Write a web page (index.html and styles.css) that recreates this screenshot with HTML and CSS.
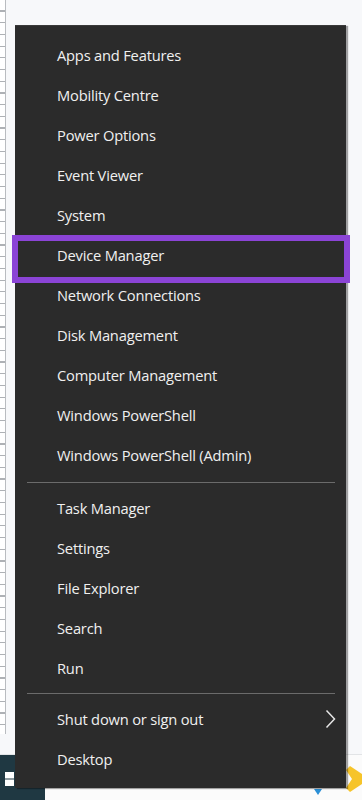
FILE: index.html
```html
<!DOCTYPE html>
<html>
<head>
<meta charset="utf-8">
<link rel="stylesheet" href="styles.css">
</head>
<body>
<div class="screen">
  <div class="desktop">
    <div class="ruler"></div>
  </div>
  <div class="taskbar">
    <div class="start">
      <svg class="winlogo" width="20" height="14" viewBox="0 0 20 14"><rect x="0" y="0" width="9" height="6.5" fill="#fff"/><rect x="10" y="0" width="9" height="6.5" fill="#fff"/><rect x="0" y="7.5" width="9" height="6.5" fill="#fff"/><rect x="10" y="7.5" width="9" height="6.5" fill="#fff"/></svg>
    </div>
    <div class="tray">
      <svg class="bluemark" width="8" height="6" viewBox="0 0 8 6"><polygon points="0,0 8,0 4,6" fill="#2a8fd6"/></svg>
      <svg class="yellow" width="16" height="26" viewBox="0 0 16 26"><polygon points="4,0 16,8 16,18 4,26 0,22 6,13 0,4" fill="#f6c42a"/></svg>
    </div>
  </div>
  <nav class="menu">
    <div class="item">Apps and Features</div>
    <div class="item">Mobility Centre</div>
    <div class="item">Power Options</div>
    <div class="item">Event Viewer</div>
    <div class="item">System</div>
    <div class="item hl">Device Manager</div>
    <div class="item">Network Connections</div>
    <div class="item">Disk Management</div>
    <div class="item">Computer Management</div>
    <div class="item">Windows PowerShell</div>
    <div class="item">Windows PowerShell (Admin)</div>
    <div class="sep sep1"></div>
    <div class="item">Task Manager</div>
    <div class="item">Settings</div>
    <div class="item">File Explorer</div>
    <div class="item">Search</div>
    <div class="item">Run</div>
    <div class="sep sep2"></div>
    <div class="item">Shut down or sign out
      <svg class="chev" width="11" height="20" viewBox="0 0 11 20"><polyline points="1.5,1.5 9.5,10 1.5,18.5" fill="none" stroke="#e6e6e6" stroke-width="1.5"/></svg>
    </div>
    <div class="item">Desktop</div>
  </nav>
</div>
</body>
</html>
```

FILE: styles.css
```css
html, body {
  margin: 0;
  padding: 0;
}
body {
  width: 362px;
  height: 800px;
  overflow: hidden;
  background: #f7f8fa;
  font-family: "Open Sans", "Noto Sans", sans-serif;
}
.screen {
  position: relative;
  width: 362px;
  height: 800px;
  display: flex;
  flex-direction: column;
}
.desktop {
  flex: 1;
  display: flex;
}
.ruler {
  width: 5px;
  margin-bottom: 20px;
  border-right: 1px solid #b9bcc0;
  background: repeating-linear-gradient(to bottom, #ffffff 0, #ffffff 10.5px, #aeb1b5 10.5px, #aeb1b5 11.7px);
}
.taskbar {
  height: 45px;
  display: flex;
  background: #fbfbfb;
  border-top: 1px solid #e2e4e6;
}
.start {
  width: 45px;
  background: #1f3842;
  display: flex;
  align-items: center;
  padding-left: 5px;
  box-sizing: border-box;
}
.winlogo {
  margin-top: 2px;
}
.tray {
  flex: 1;
  display: flex;
  align-items: flex-end;
  justify-content: flex-end;
}
.bluemark {
  margin-right: 24px;
  margin-bottom: 5px;
}
.yellow {
  margin-bottom: 8px;
}
.menu {
  position: absolute;
  left: 15px;
  top: 25px;
  width: 331px;
  height: 763px;
  box-sizing: border-box;
  padding: 10px 0 8px;
  background: #2b2b2b;
  border-top: 1px solid #3a3a3a;
  box-shadow: 2px 1px 1px rgba(0, 0, 0, 0.35);
  display: flex;
  flex-direction: column;
}
.item {
  position: relative;
  height: 40px;
  box-sizing: border-box;
  flex: none;
  display: flex;
  align-items: center;
  padding-left: 42px;
  padding-bottom: 3px;
  font-size: 14.7px;
  color: #f0f0f0;
  letter-spacing: -0.2px;
}
.item.hl::after {
  content: "";
  position: absolute;
  left: -3px;
  right: -4px;
  top: -1px;
  bottom: -7px;
  border: 6px solid #8b44d6;
}
.sep {
  height: 1px;
  flex: none;
  background: #6b6b6b;
  margin: 6px 11px 6px 12px;
}
.sep2 {
  margin-top: 4px;
}
.chev {
  margin-left: auto;
  margin-right: 10px;
}
```
